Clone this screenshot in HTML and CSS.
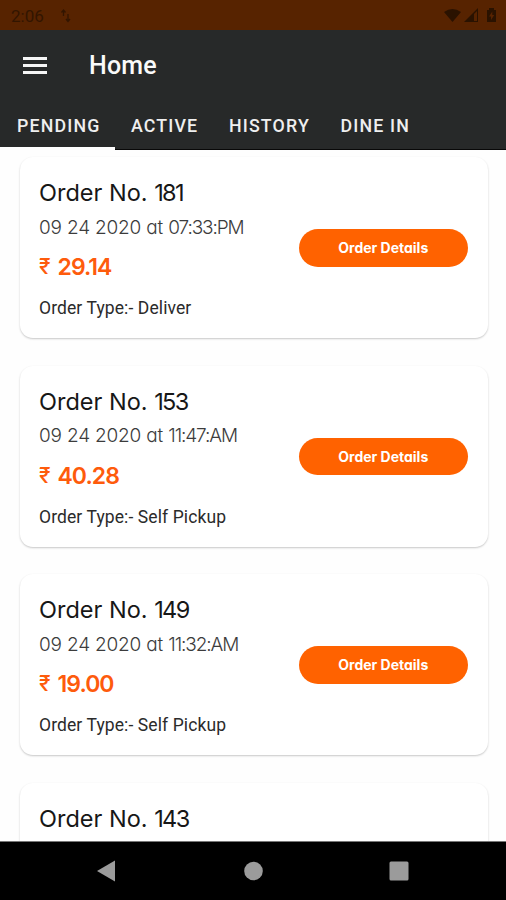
FILE: index.html
```html
<!DOCTYPE html>
<html lang="en">
<head>
<meta charset="utf-8">
<title>Home</title>
<link rel="stylesheet" href="styles.css">
</head>
<body>
<div class="statusbar">
  <span class="clock">2:06</span>
  <svg class="data" width="12" height="16" viewBox="0 0 12 16"><path d="M3.500 8V2.500M1.500 4.500l2-2.500 2 2.500M8 6v7M6 11l2 2.500 2-2.500" fill="none" stroke="#321500" stroke-width="1.3"/></svg>
  <svg class="signals" width="56" height="18" viewBox="0 0 56 18">
    <path d="M0 5Q8.500-1 17 5L8.500 15Z" fill="#2a1200"/>
    <path d="M34 1V15H20Z" fill="#2a1200"/>
    <path d="M30 7L33 4V14H30Z" fill="#572300"/>
    <path d="M43 3h2V1h5v2h2v12h-9Z" fill="#2a1200"/>
    <path d="M48.300 4.500L45 9.500h2V13l3.300-5h-2Z" fill="#572300"/>
  </svg>
</div>
<header class="header">
  <div class="toolbar">
    <div class="menu"><i></i><i></i><i></i></div>
    <h1>Home</h1>
  </div>
  <nav class="tabs">
    <span class="tab pending">PENDING</span>
    <span class="tab active">ACTIVE</span>
    <span class="tab history">HISTORY</span>
    <span class="tab dine">DINE IN</span>
  </nav>
</header>
<main class="orders">
  <article class="card">
    <div class="info">
      <h2>Order No. <span class="number">181</span></h2>
      <p class="date">09 24 2020 at <span class="time">07:33:PM</span></p>
      <p class="price"><span class="rupee">₹</span><span class="amount">29.14</span></p>
      <p class="type">Order Type:- Deliver</p>
    </div>
    <button>Order Details</button>
  </article>
  <article class="card">
    <div class="info">
      <h2>Order No. <span class="number">153</span></h2>
      <p class="date">09 24 2020 at <span class="time">11:47:AM</span></p>
      <p class="price"><span class="rupee">₹</span><span class="amount">40.28</span></p>
      <p class="type">Order Type:- Self Pickup</p>
    </div>
    <button>Order Details</button>
  </article>
  <article class="card">
    <div class="info">
      <h2>Order No. <span class="number">149</span></h2>
      <p class="date">09 24 2020 at <span class="time">11:32:AM</span></p>
      <p class="price"><span class="rupee">₹</span><span class="amount">19.00</span></p>
      <p class="type">Order Type:- Self Pickup</p>
    </div>
    <button>Order Details</button>
  </article>
  <article class="card">
    <div class="info">
      <h2>Order No. <span class="number">143</span></h2>
    </div>
  </article>
</main>
<footer class="navbar">
  <svg width="506" height="58" viewBox="0 0 506 58" fill="#9b9b9b"><path d="M97 29L115 18.500V39.500Z"/><circle cx="253.500" cy="29" r="9.300"/><rect x="389.500" y="19.500" width="19" height="19" rx="1.500"/></svg>
</footer>
</body>
</html>
```
FILE: styles.css
```css
* { box-sizing: border-box; }
body {
  margin: 0;
  width: 506px;
  height: 900px;
  overflow: hidden;
  display: flex;
  flex-direction: column;
  background: #fefefe;
  font-family: Inter, sans-serif;
}
h1, h2, p { margin: 0; }
.statusbar {
  flex: none;
  height: 30px;
  background: #572300;
  display: flex;
  align-items: center;
  padding: 2px 6px 0 11px;
}
.clock {
  font: 17px/28px Roboto, sans-serif;
  color: #321500;
  width: 49px;
}
.signals { margin-left: auto; }
.header {
  flex: none;
  height: 120px;
  background: #272929;
  color: #fff;
}
.toolbar {
  height: 70px;
  display: flex;
  align-items: center;
  padding-left: 23px;
}
.menu {
  width: 24px;
  display: grid;
  gap: 4px;
  margin-right: 42px;
}
.menu i { height: 3px; background: #f5f5f5; }
h1 {
  font: 500 25px/30px Roboto, sans-serif;
  letter-spacing: .15px;
  padding-top: 2px;
  color: #fafafa;
}
.tabs {
  height: 50px;
  display: flex;
  box-shadow: inset 0 -1px #080808;
}
.tab {
  flex: none;
  height: 50px;
  font: 500 17.800px/52px Roboto, sans-serif;
  letter-spacing: 1.15px;
  color: #efefef;
  white-space: nowrap;
}
.pending {
  width: 115px;
  padding-left: 17px;
  border-bottom: 3px solid #fefefe;
}
.active { width: 114px; padding-left: 16px; }
.history { width: 111.500px; }
.orders {
  flex: 1;
  min-height: 0;
  overflow: hidden;
  padding: 7px 18px 0 20px;
  display: flex;
  flex-direction: column;
  gap: 27.600px;
}
.card {
  flex: none;
  height: 181px;
  border-radius: 13px;
  background: #fff;
  box-shadow: 0 1px 2px rgba(0, 0, 0, .22);
  display: flex;
  justify-content: space-between;
  padding: 0 20px 0 19px;
}
.info { padding-top: 21px; white-space: nowrap; }
h2 {
  font-weight: 400;
  font-size: 23.500px;
  line-height: 30px;
  color: #171717;
}
.number { letter-spacing: -1.600px; }
.date {
  margin-top: 6.500px;
  font-weight: 300;
  font-size: 19px;
  line-height: 26px;
  letter-spacing: -.18px;
  color: #3c3c3c;
  font-feature-settings: "cv11";
}
.time { letter-spacing: -1.100px; }
.price {
  margin-top: 11.500px;
  display: flex;
  font-weight: 600;
  font-size: 23px;
  line-height: 30px;
  color: #fe5b0c;
}
.rupee { width: 18.500px; font-size: 21px; font-weight: 500; }
.amount { letter-spacing: -.950px; }
.type {
  margin-top: 14px;
  font: 17.500px/24px Roboto, sans-serif;
  letter-spacing: .1px;
  color: #2b2b2b;
}
button {
  margin: 72px 0 0;
  padding: 0;
  width: 169.500px;
  height: 37.500px;
  border: 0;
  border-radius: 19px;
  background: #ff6200;
  color: #fff;
  font: 700 14px/38px Inter, sans-serif;
  font-feature-settings: "cv11";
}
.navbar {
  flex: none;
  height: 59px;
  background: #000;
  border-top: 1px solid #777;
}
.navbar svg { display: block; }
```
